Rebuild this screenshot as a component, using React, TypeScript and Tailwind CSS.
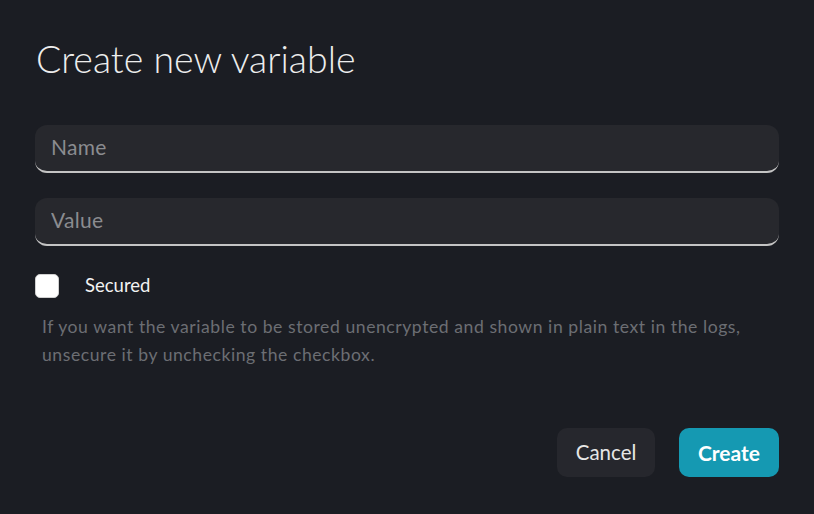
import { useState } from 'react';

export default function App() {
  const [secured, setSecured] = useState(false);

  return (
    <div
      className="w-[814px] h-[514px] bg-[#1b1d23] text-white px-[35px] pt-[37px] flex flex-col"
      style={{ fontFamily: 'Lato, "Noto Sans", sans-serif' }}
    >
      {/* Titolo */}
      <h1 className="text-[37.5px] font-light leading-[44px] text-[#ededed] pl-[1px]">Create new variable</h1>

      {/* Campi */}
      <div className="mt-[44px] flex flex-col gap-[25px]">
        <input
          placeholder="Name"
          className="h-[48px] w-full bg-[#27282d] rounded-[12px] border-b-2 border-[#c4c4c4] px-4 pb-[3px] text-[21px] tracking-[0.3px] text-white placeholder:text-[#8b8c90] outline-none"
        />
        <input
          placeholder="Value"
          className="h-[48px] w-full bg-[#27282d] rounded-[12px] border-b-2 border-[#c4c4c4] px-4 pb-[3px] text-[21px] tracking-[0.3px] text-white placeholder:text-[#8b8c90] outline-none"
        />
      </div>

      {/* Checkbox */}
      <label className="mt-[26px] flex items-center gap-[26px] cursor-pointer">
        <span
          onClick={() => setSecured(!secured)}
          className="w-[24px] h-[24px] rounded-[5px] bg-white border border-[#d0d0d0]"
        />
        <span className="text-[18.5px] text-[#f2f2f2]">Secured</span>
      </label>

      <p className="mt-[13px] pl-[7px] text-[17.6px] leading-[28px] tracking-[0.55px] text-[#6c6e73] max-w-[720px]">
        If you want the variable to be stored unencrypted and shown in plain text in the logs, unsecure it by unchecking the checkbox.
      </p>

      {/* Bottoni */}
      <div className="mt-auto mb-[37px] flex justify-end gap-[24px]">
        <button className="h-[49px] w-[98px] rounded-[10px] bg-[#26272d] text-[20.5px] text-[#e6e6e6]">Cancel</button>
        <button className="h-[49px] w-[100px] rounded-[10px] bg-[#1599b2] text-[21px] font-bold text-white">Create</button>
      </div>
    </div>
  );
}
